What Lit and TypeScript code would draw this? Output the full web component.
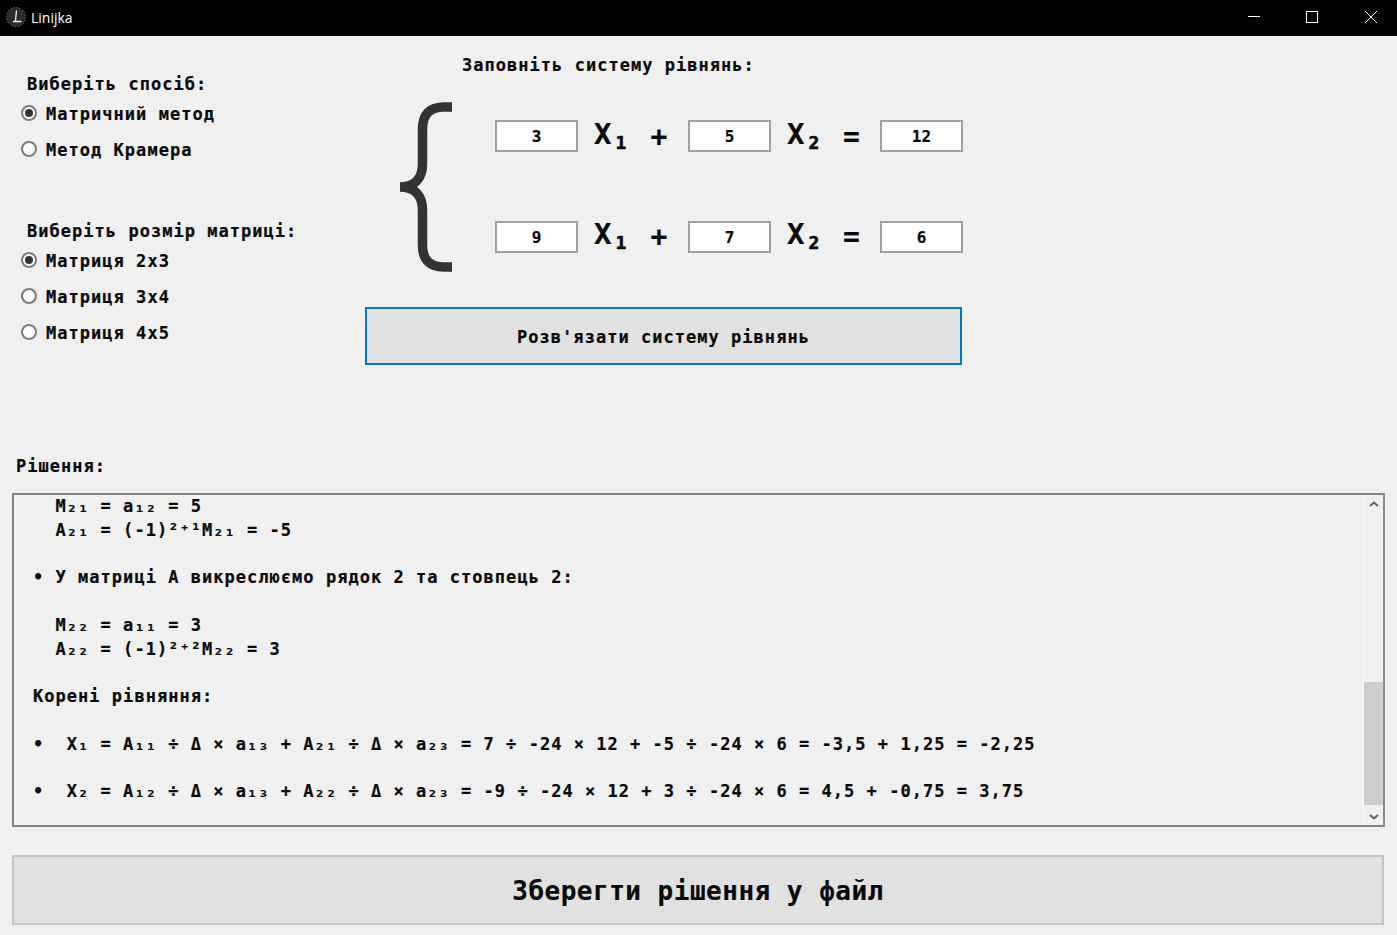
import { LitElement, html, css, svg } from "lit";
import { customElement } from "lit/decorators.js";

const solutionLines = [
  "  M₂₁ = a₁₂ = 5",
  "  A₂₁ = (-1)²⁺¹M₂₁ = -5",
  "",
  "• У матриці А викреслюємо рядок 2 та стовпець 2:",
  "",
  "  M₂₂ = a₁₁ = 3",
  "  A₂₂ = (-1)²⁺²M₂₂ = 3",
  "",
  "Корені рівняння:",
  "",
  "•  X₁ = A₁₁ ÷ Δ × a₁₃ + A₂₁ ÷ Δ × a₂₃ = 7 ÷ -24 × 12 + -5 ÷ -24 × 6 = -3,5 + 1,25 = -2,25",
  "",
  "•  X₂ = A₁₂ ÷ Δ × a₁₃ + A₂₂ ÷ Δ × a₂₃ = -9 ÷ -24 × 12 + 3 ÷ -24 × 6 = 4,5 + -0,75 = 3,75",
];

@customElement("app-root")
export class AppRoot extends LitElement {
  static styles = css`
    :host {
      display: block;
      width: 1397px;
      height: 935px;
      overflow: hidden;
      background: #f0f0f0;
      color: #0a0a0a;
      font-family: "DejaVu Sans Mono", monospace;
      font-weight: 700;
      font-size: 17px;
      letter-spacing: 1.03px;
      -webkit-text-stroke: 0.2px #0a0a0a;
    }
    .titlebar {
      height: 36px;
      padding-bottom: 2px;
      box-sizing: border-box;
      background: #000;
      display: flex;
      align-items: center;
      color: #fff;
      font-family: "Open Sans", sans-serif;
      font-weight: 400;
      font-size: 14px;
      letter-spacing: 0;
      -webkit-text-stroke: 0;
    }
    .logo { margin-left: 6px; margin-right: 5px; width: 20px; height: 20px; }
    .title { flex: 1; }
    .controls { display: flex; margin-right: -3px; }
    .winbtn { width: 59px; height: 34px; display: flex; align-items: center; justify-content: center; }
    .winbtn.min { margin-right: -1px; }
    .top { display: flex; height: 420px; }
    .left { width: 365px; padding: 38px 0 0 21px; box-sizing: border-box; }
    .heading { line-height: 20px; white-space: pre; }
    .left .heading { margin-left: 6px; margin-bottom: 1px; }
    .left .second { margin-top: 54px; }
    .radio { height: 36px; display: flex; align-items: center; gap: 9px; }
    .radio .text { padding-top: 2px; }
    .dot {
      width: 16px; height: 16px; box-sizing: border-box; border-radius: 50%;
      background: #fff; border: 2px solid #7c7c7c;
      display: flex; align-items: center; justify-content: center;
    }
    .dot.on::after { content: ""; width: 8px; height: 8px; border-radius: 50%; background: #333; }
    .right { width: 600px; padding-top: 19px; box-sizing: border-box; }
    .right .heading { margin-left: 97px; }
    .system { display: flex; margin: 27px 0 0 35px; height: 205px; }
    .brace { width: 60px; height: 178px; display: block; flex: none; }
    .rows { margin-left: 35px; padding-top: 18px; display: grid; row-gap: 69px; align-content: start; }
    .row {
      display: grid; grid-template-columns: 83px 52px 58px 83px 52px 57px 83px;
      grid-template-rows: 32px; height: 32px; align-items: center;
    }
    .field {
      height: 32px; box-sizing: border-box; background: #fff; border: 2px solid #a0a0a0;
      display: flex; align-items: center; justify-content: center; font-size: 16px; letter-spacing: 0;
    }
    .x { font-size: 29px; letter-spacing: 0; padding: 0 0 4px 16px; line-height: 32px; white-space: nowrap; }
    .x sub { font-size: 18px; line-height: 0; vertical-align: -5px; margin-left: 4px; -webkit-text-stroke: 0.6px #0a0a0a; }
    .row.lower .x { padding-bottom: 6px; }
    .op { font-size: 28px; letter-spacing: 0; text-align: center; line-height: 32px; padding-top: 2px; }
    .row.lower .op { padding-top: 0; }
    .solve {
      width: 597px; height: 58px; box-sizing: border-box; padding-top: 2px;
      border: 2px solid #0078d7; background: #e1e1e1;
      display: flex; align-items: center; justify-content: center;
    }
    .label { margin-left: 16px; line-height: 20px; height: 20px; }
    .box {
      margin: 17px 12px 0 12px; height: 334px; box-sizing: border-box;
      border: 2px solid #828282; border-right-color: #8c8c8c;
      display: flex; overflow: hidden;
    }
    .content { flex: 1; overflow: hidden; padding-left: 19px; line-height: 23.75px; white-space: pre; min-width: 0; }
    .content div { height: 23.75px; }
    .scroll { width: 20px; flex: none; background: #f0f0f0; display: flex; flex-direction: column; border-left: 1px solid #f7f7f7; box-sizing: border-box; }
    .arrow { height: 17px; display: flex; align-items: center; justify-content: center; }
    .track { flex: 1; display: flex; flex-direction: column; justify-content: flex-end; }
    .thumb { height: 123px; background: #cdcdcd; margin-bottom: 3px; }
    .save {
      margin: 28px 13px 0 12px; height: 70px; box-sizing: border-box; padding-top: 2px;
      background: #e1e1e1; border: 2px solid #c4c4c4;
      display: flex; align-items: center; justify-content: center;
      font-size: 26px; letter-spacing: 0.5px;
    }
  `;

  private eqRow(a: string, b: string, c: string, lower = false) {
    return html`<div class="row ${lower ? "lower" : ""}">
      <div class="field">${a}</div>
      <div class="x">X<sub>1</sub></div>
      <div class="op">+</div>
      <div class="field">${b}</div>
      <div class="x">X<sub>2</sub></div>
      <div class="op">=</div>
      <div class="field">${c}</div>
    </div>`;
  }

  private radio(text: string, on = false) {
    return html`<div class="radio"><span class="dot ${on ? "on" : ""}"></span><span class="text">${text}</span></div>`;
  }

  render() {
    return html`
      <div class="titlebar">
        <svg class="logo" viewBox="0 0 20 20">
          <circle cx="10" cy="10" r="9.5" fill="#2b2b2b" stroke="#9a9a9a" stroke-width="1" stroke-dasharray="1 2"></circle>
          <path d="M10.5 3.5 L9.5 14 M7 14.5 H15.5" stroke="#eee" stroke-width="1.3" fill="none"></path>
        </svg>
        <span class="title">Linijka</span>
        <div class="controls">
          <div class="winbtn min"><svg width="12" height="12" viewBox="0 0 12 12"><path d="M0 5.5H12" stroke="#fff" fill="none"></path></svg></div>
          <div class="winbtn"><svg width="12" height="12" viewBox="0 0 12 12"><rect x=".5" y=".5" width="11" height="11" stroke="#fff" fill="none"></rect></svg></div>
          <div class="winbtn"><svg width="12" height="12" viewBox="0 0 12 12"><path d="M0 0L12 12M12 0L0 12" stroke="#fff" fill="none"></path></svg></div>
        </div>
      </div>
      <div class="top">
        <div class="left">
          <div class="heading">Виберіть спосіб:</div>
          ${this.radio("Матричний метод", true)}
          ${this.radio("Метод Крамера")}
          <div class="heading second">Виберіть розмір матриці:</div>
          ${this.radio("Матриця 2х3", true)}
          ${this.radio("Матриця 3х4")}
          ${this.radio("Матриця 4х5")}
        </div>
        <div class="right">
          <div class="heading">Заповніть систему рівнянь:</div>
          <div class="system">
            <svg class="brace" viewBox="0 0 60 178">
              ${svg`<path d="M52 5 H44 C30 5 22.5 12 22.5 27 V62 C22.5 76 15 85 0 85 C15 85 22.5 94 22.5 108 V143 C22.5 158 30 165 44 165 H52" fill="none" stroke="#333" stroke-width="9.5"></path>`}
            </svg>
            <div class="rows">
              ${this.eqRow("3", "5", "12")}
              ${this.eqRow("9", "7", "6", true)}
            </div>
          </div>
          <div class="solve">Розв'язати систему рівнянь</div>
        </div>
      </div>
      <div class="label">Рішення:</div>
      <div class="box">
        <div class="content">${solutionLines.map((l) => html`<div>${l}</div>`)}</div>
        <div class="scroll">
          <div class="arrow"><svg width="10" height="6" viewBox="0 0 10 6"><path d="M1 5L5 1.5L9 5" stroke="#606060" stroke-width="2" fill="none"></path></svg></div>
          <div class="track"><div class="thumb"></div></div>
          <div class="arrow"><svg width="10" height="6" viewBox="0 0 10 6"><path d="M1 1L5 4.5L9 1" stroke="#606060" stroke-width="2" fill="none"></path></svg></div>
        </div>
      </div>
      <div class="save">Зберегти рішення у файл</div>
    `;
  }
}
